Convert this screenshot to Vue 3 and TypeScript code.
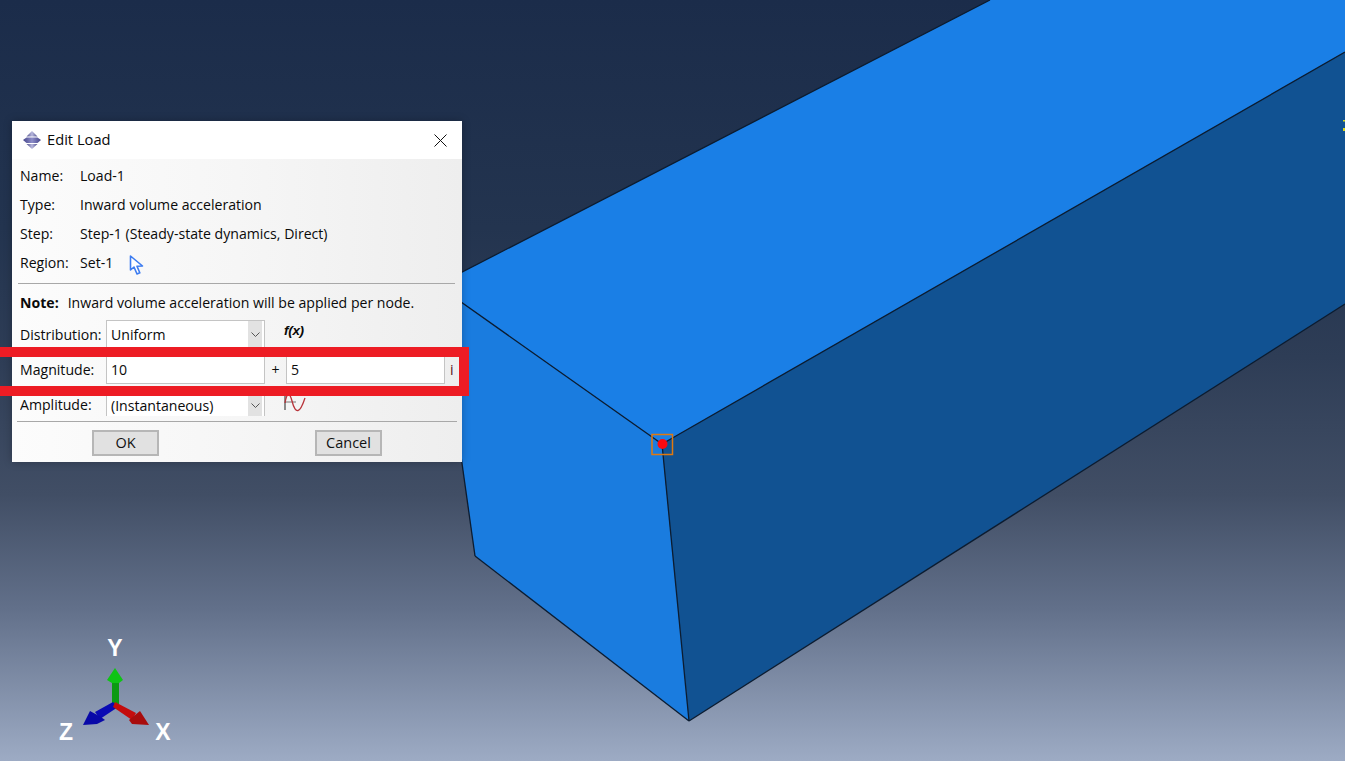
<script setup lang="ts">
interface InfoRow {
  label: string
  value: string
  pick?: boolean
}

const info: InfoRow[] = [
  { label: 'Name:', value: 'Load-1' },
  { label: 'Type:', value: 'Inward volume acceleration' },
  { label: 'Step:', value: 'Step-1 (Steady-state dynamics, Direct)' },
  { label: 'Region:', value: 'Set-1', pick: true }
]
</script>

<template>
  <div class="scene">
    <svg class="viewport" width="1345" height="761" viewBox="0 0 1345 761">
      <!-- part -->
      <polygon class="face-top" points="437,285 990,0 1345,0 1345,52 662,444" />
      <polygon class="face-left" points="437,285 662,444 689,721 475,556" />
      <polygon class="face-right" points="662,444 1345,52 1345,304 689,721" />
      <g class="edges">
        <line x1="437" y1="285" x2="990" y2="0" />
        <line x1="437" y1="285" x2="662" y2="444" />
        <line x1="662" y1="444" x2="1345" y2="52" />
        <line x1="662" y1="444" x2="689" y2="721" />
        <line x1="437" y1="285" x2="475" y2="556" />
        <line x1="475" y1="556" x2="689" y2="721" />
        <line x1="689" y1="721" x2="1345" y2="304" />
      </g>

      <!-- picked node -->
      <rect x="652" y="434.5" width="20.5" height="20" fill="none" stroke="#e0790f" stroke-width="1.5" />
      <circle cx="662.5" cy="444" r="5" fill="#fb0a10" />

      <!-- clipped triad letter at the right edge -->
      <rect x="1343" y="120" width="2" height="1.5" fill="#d8d820" />
      <rect x="1343" y="128" width="2" height="3" fill="#d8d820" />

      <!-- triad -->
      <polygon points="112,682 119,682 119,704 115,706 112,704" fill="#0c9a12" />
      <polygon points="115,668 123,680 119,683 112,683 107,680" fill="#0ec414" />
      <polygon points="113,702 118,707 100,719 95,712" fill="#0a0ab4" />
      <polygon points="83,725 90,711 101,717 105,720 97,724" fill="#0808a8" />
      <polygon points="115,702 113,707 132,720 136,713" fill="#c40c0c" />
      <polygon points="140,711 149,725 132,724 129,720" fill="#a80c0c" />
      <text class="axis" x="115" y="656">Y</text>
      <text class="axis" x="66" y="740">Z</text>
      <text class="axis" x="163" y="740">X</text>
    </svg>

    <section class="dialog">
      <header class="titlebar">
        <svg class="app-icon" width="18" height="18" viewBox="0 0 18 18">
          <defs>
            <linearGradient id="capGrad" x1="0" y1="0" x2="1" y2="0">
              <stop offset="0" stop-color="#50508c" />
              <stop offset="0.5" stop-color="#b8b8de" />
              <stop offset="1" stop-color="#50508c" />
            </linearGradient>
            <linearGradient id="bandGrad" x1="0" y1="0" x2="1" y2="0">
              <stop offset="0" stop-color="#45458a" />
              <stop offset="0.5" stop-color="#8c8cc8" />
              <stop offset="1" stop-color="#45458a" />
            </linearGradient>
          </defs>
          <polygon points="9,0 14.5,5.5 3.5,5.5" fill="url(#capGrad)" />
          <polygon points="0,9 3.5,6.5 14.5,6.5 18,9 14.5,12 3.5,12" fill="url(#bandGrad)" />
          <polygon points="3.5,13 14.5,13 9,18" fill="url(#capGrad)" />
        </svg>
        <span class="title">Edit Load</span>
        <svg class="close" width="13" height="13" viewBox="0 0 13 13">
          <path d="M0.5 0.5 L12.5 12.5 M12.5 0.5 L0.5 12.5" stroke="#111" stroke-width="1" fill="none" />
        </svg>
      </header>

      <div class="body">
        <div v-for="row in info" :key="row.label" class="info-row">
          <span class="info-label">{{ row.label }}</span>
          <span>{{ row.value }}</span>
          <svg v-if="row.pick" class="pick" width="15" height="20" viewBox="0 0 15 20">
            <path d="M1.5 1 L1.5 15 L5 12 L8 19 L10.8 17.8 L8 11.2 L13.5 11 Z" fill="#fff" stroke="#3d7cf0" stroke-width="1.6" stroke-linejoin="round" />
          </svg>
        </div>

        <hr class="rule rule-top" />

        <p class="note"><b>Note:</b><span>Inward volume acceleration will be applied per node.</span></p>

        <div class="form-row">
          <span class="form-label">Distribution:</span>
          <div class="combo">
            <span>Uniform</span>
            <span class="combo-btn">
              <svg width="9" height="5" viewBox="0 0 9 5"><path d="M0.5 0.5 L4.5 4.5 L8.5 0.5" fill="none" stroke="#555" /></svg>
            </span>
          </div>
          <i class="fx">f(x)</i>
        </div>

        <div class="form-row">
          <span class="form-label">Magnitude:</span>
          <div class="field">10</div>
          <span class="plus">+</span>
          <div class="field">5</div>
          <span class="imag">i</span>
        </div>

        <div class="form-row form-row-clipped">
          <span class="form-label">Amplitude:</span>
          <div class="combo combo-clipped">
            <span>(Instantaneous)</span>
            <span class="combo-btn">
              <svg width="9" height="5" viewBox="0 0 9 5"><path d="M0.5 0.5 L4.5 4.5 L8.5 0.5" fill="none" stroke="#555" /></svg>
            </span>
          </div>
          <svg class="amp" width="22" height="18" viewBox="0 0 22 18">
            <path d="M1 8 L12 8" stroke="#777" stroke-width="1" fill="none" />
            <path d="M1 1 L1 16" stroke="#444" stroke-width="1.2" fill="none" />
            <path d="M1 9 C3 -3 6 -1 8 7 C10 15 12 17 14 16.5 C17 16 19 10 21 4" stroke="#b8333a" stroke-width="1.3" fill="none" />
          </svg>
        </div>

        <hr class="rule rule-bottom" />

        <div class="actions">
          <button class="btn" type="button">OK</button>
          <button class="btn" type="button">Cancel</button>
        </div>
      </div>
    </section>

    <div class="highlight"></div>
  </div>
</template>

<style scoped>
.scene {
  position: relative;
  width: 1345px;
  height: 761px;
  overflow: hidden;
  font-family: "Open Sans", "Noto Sans", sans-serif;
  background: linear-gradient(180deg, #1b2c4a 0%, #23344f 30%, #2e3d56 47%, #414e65 65%, #62708a 80%, #9dabc4 100%);
}
.viewport {
  position: absolute;
  inset: 0;
  display: block;
}
.face-top { fill: #1a7fe6; }
.face-left { fill: #1a7cdf; }
.face-right { fill: #115292; }
.edges line { stroke: #0c1c30; stroke-width: 1.3; }
.axis {
  fill: #fff;
  font-family: "Liberation Sans", sans-serif;
  font-weight: 700;
  font-size: 23px;
  text-anchor: middle;
}

.dialog {
  position: absolute;
  left: 12px;
  top: 121px;
  width: 450px;
  height: 341px;
  display: flex;
  flex-direction: column;
  font-size: 14.1px;
  color: #0a0a0a;
  box-shadow: 0 0 8px rgba(0, 0, 0, 0.25);
}
.titlebar {
  height: 38px;
  flex: none;
  background: #fff;
  display: flex;
  align-items: center;
  padding: 0 15px 0 11px;
  gap: 6px;
}
.app-icon { flex: none; margin-top: -1px; }
.title { font-size: 14.7px; padding-bottom: 2px; }
.close { margin-left: auto; }

.body {
  flex: 1;
  padding: 2px 5px 0 8px;
  background: linear-gradient(90deg, #fcfcfc 0%, #f6f6f6 50%, #eeeeee 100%);
  display: flex;
  flex-direction: column;
}
.info-row {
  height: 29px;
  display: flex;
  align-items: center;
  flex: none;
}
.info-label { width: 60px; flex: none; }
.pick { margin-left: 16px; margin-top: 4px; }

.rule {
  margin: 0;
  border: 0;
  height: 1px;
  flex: none;
  background: #a8a8a8;
}
.rule-top { margin: 6px 2px 0 -2px; }
.rule-bottom { margin: 1px 0 0 -3px; }

.note {
  margin: 0;
  height: 33px;
  box-sizing: border-box;
  padding-top: 3px;
  display: flex;
  align-items: center;
  gap: 9px;
  flex: none;
}

.form-row {
  height: 35px;
  flex: none;
  display: flex;
  align-items: center;
}
.form-row-clipped {
  height: 33px;
  align-items: flex-start;
  overflow: hidden;
}
.form-label { width: 86px; flex: none; }
.form-row-clipped .form-label { line-height: 36px; }
.combo, .field {
  height: 29px;
  width: 159px;
  flex: none;
  box-sizing: border-box;
  background: #fff;
  border: 1px solid #c4c4c4;
  padding-left: 4px;
  display: flex;
  align-items: center;
}
.combo {
  justify-content: space-between;
  padding-right: 2px;
}
.combo-clipped {
  height: 26px;
  margin-top: 3px;
  padding-top: 4px;
  border-top: 0;
  border-bottom: 0;
}
.combo-btn {
  width: 14px;
  height: 100%;
  background: #e2e2e2;
  display: flex;
  align-items: center;
  justify-content: center;
}
.fx {
  margin-left: 19px;
  margin-top: -8px;
  font-family: "Liberation Sans", sans-serif;
  font-weight: 700;
  font-size: 13.5px;
  letter-spacing: -0.3px;
}
.plus {
  width: 21px;
  flex: none;
  text-align: center;
}
.imag {
  margin-left: 5px;
  color: #5a1020;
}
.amp { margin: 7px 0 0 19px; flex: none; }

.actions {
  flex: 1;
  display: flex;
  padding: 8px 0 0 72px;
  gap: 156px;
  align-items: flex-start;
}
.btn {
  width: 67px;
  height: 26px;
  box-sizing: border-box;
  background: #e1e1e1;
  border: 2px solid #b6b6b6;
  padding: 0 0 2px;
  font: inherit;
  font-size: 14.5px;
  color: #111;
}

.highlight {
  position: absolute;
  left: 0;
  top: 347px;
  width: 469px;
  height: 49px;
  box-sizing: border-box;
  border: 10px solid #ed1c24;
  border-left: 0;
}
</style>
